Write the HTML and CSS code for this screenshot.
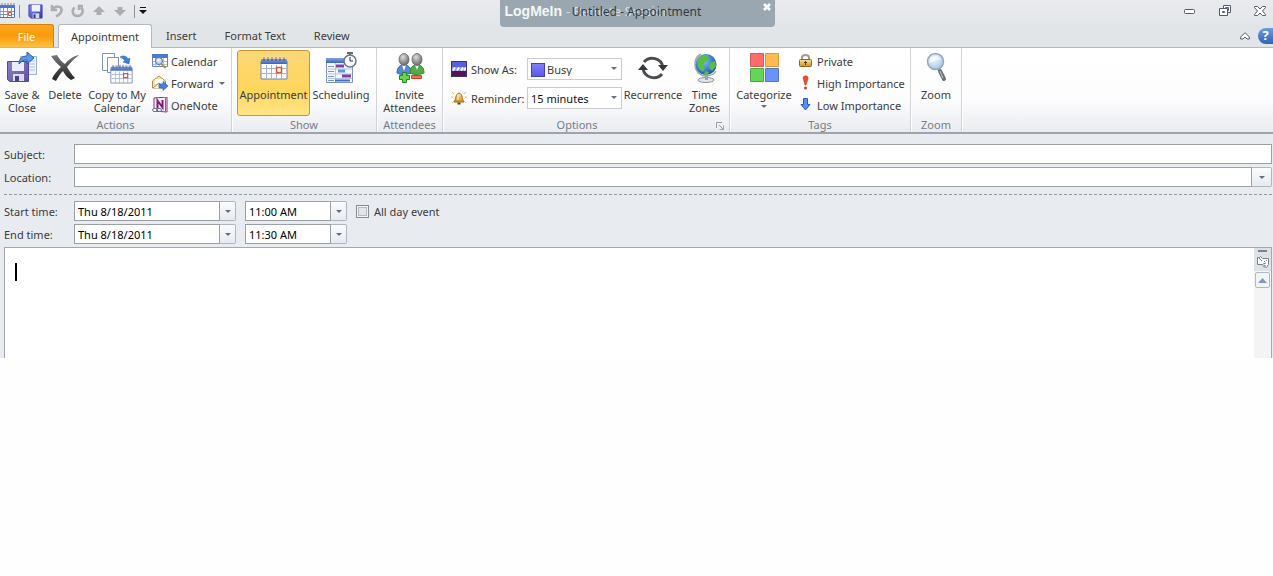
FILE: index.html
```html
<!DOCTYPE html>
<html lang="en">
<head>
    <title>Untitled - Appointment</title>
    <meta charset="UTF-8">
    <meta name="viewport" content="width=device-width, initial-scale=1">
    <link rel="stylesheet" href="styles.css">
</head>
<body>
    <!-- shared icons -->
    <svg class="defs" width="0" height="0" aria-hidden="true">
        <defs>
            <linearGradient id="blue-bar" x1="0" y1="0" x2="0" y2="1">
                <stop offset="0" stop-color="#7da5ec"/><stop offset="1" stop-color="#3c62c4"/>
            </linearGradient>
            <linearGradient id="purple" x1="0" y1="0" x2="1" y2="1">
                <stop offset="0" stop-color="#8f83cc"/><stop offset="1" stop-color="#5c4f9e"/>
            </linearGradient>
            <linearGradient id="save-blue" x1="0" y1="0" x2="1" y2="1">
                <stop offset="0" stop-color="#7f8ff0"/><stop offset="1" stop-color="#3138a8"/>
            </linearGradient>
            <linearGradient id="dark" x1="0" y1="0" x2="0" y2="1">
                <stop offset="0" stop-color="#777"/><stop offset="1" stop-color="#222"/>
            </linearGradient>
            <radialGradient id="glass" cx=".4" cy=".35" r=".7">
                <stop offset="0" stop-color="#f4faff"/><stop offset="1" stop-color="#9cc3ea"/>
            </radialGradient>
            <radialGradient id="sea" cx=".4" cy=".35" r=".7">
                <stop offset="0" stop-color="#7cc4fa"/><stop offset="1" stop-color="#1450a8"/>
            </radialGradient>
            <radialGradient id="head" cx=".4" cy=".3" r=".7">
                <stop offset="0" stop-color="#ddd"/><stop offset="1" stop-color="#666"/>
            </radialGradient>
            <linearGradient id="gold" x1="0" y1="0" x2="0" y2="1">
                <stop offset="0" stop-color="#fbe6a0"/><stop offset="1" stop-color="#c98f1c"/>
            </linearGradient>
        </defs>
        <symbol id="month" viewBox="0 0 28 24">
            <path d="M1 5h26v18H1z" fill="#fff" stroke="#7382a4"/>
            <path d="M1 3h26v5H1z" fill="url(#blue-bar)"/>
            <path d="M4 1v4M8 1v4M12 1v4M16 1v4M20 1v4M24 1v4" stroke="#666e80" stroke-width="2"/>
            <path d="M4 0v3M8 0v3M12 0v3M16 0v3M20 0v3M24 0v3" stroke="#e8ecf4"/>
            <path d="M6.500 9v14M11.500 9v14M16.500 9v14M21.500 9v14M2 12.500h24M2 17.500h24" stroke="#a3b3d2"/>
            <path d="M16.500 11.500h5v5h-5z" fill="#fff" stroke="#e4532b" stroke-width="1.500"/>
        </symbol>
        <symbol id="floppy" viewBox="0 0 16 16">
            <path d="M1 1h14v14H3l-2-2z" fill="url(#save-blue)" stroke="#3c42a8"/>
            <path d="M4 1h9v7H4z" fill="#eef2fb"/>
            <path d="M5 10h7v5H5z" fill="#d8d8e2"/>
            <path d="M6 11h2v4H6z" fill="#2b3080"/>
        </symbol>
    </svg>

    <div class="window">
        <header class="title-bar">
            <div class="quick-access">
                <svg class="app-icon" width="16" height="16" viewBox="0 0 16 16">
                    <path d="M0 2.500h14.500v12H0z" fill="#fff" stroke="#5370b4"/>
                    <path d="M0 2h15v3H0z" fill="#4a76d0"/>
                    <path d="M2 0v3M5 0v3M8 0v3M11 0v3M14 0v3" stroke="#7b849a"/>
                    <path d="M3.500 5v9M7.500 5v9M11.500 5v9M0 8.500h14M0 11.500h14" stroke="#8296c4"/>
                    <path d="M8.500 9.500h3v3h-3z" fill="#fff" stroke="#e4532b"/>
                </svg>
                <span class="separator"></span>
                <button aria-label="Save"><svg width="15" height="15"><use href="#floppy"/></svg></button>
                <button aria-label="Undo"><svg width="14" height="14" viewBox="0 0 14 14" fill="none" stroke="#abadb1" stroke-width="2.500"><path d="M2 1v5h5M2.500 5.500C6 1 12 2 11.500 6.500c-.3 2.500-2.500 4.500-5.500 6"/></svg></button>
                <button aria-label="Redo"><svg width="14" height="14" viewBox="0 0 14 14" fill="none" stroke="#abadb1" stroke-width="2.500"><path d="M3.500 3.500C0 7 2 12 6.500 12s7-5 3.500-8.500M7 2h5M8 1v5"/></svg></button>
                <button aria-label="Previous item"><svg width="14" height="14" viewBox="0 0 14 14"><path d="M7 2l6 6H9.500v3h-5V8H1z" fill="#abadb1"/></svg></button>
                <button aria-label="Next item"><svg width="14" height="14" viewBox="0 0 14 14"><path d="M7 12l6-6H9.500V3h-5v3H1z" fill="#abadb1"/></svg></button>
                <span class="separator"></span>
                <button class="customize" aria-label="Customize"><svg width="8" height="8" viewBox="0 0 8 8"><path d="M1 0h6v1H1zM0 3h8L4 7z" fill="#111"/></svg></button>
            </div>
            <h1 class="window-title">Untitled - Appointment</h1>
            <div class="session">
                <strong>LogMeIn</strong><span>- Remote Session</span>
                <button aria-label="Close session"><svg width="8" height="8" viewBox="0 0 8 8"><path d="M1 1l6 6M7 1L1 7" stroke="#fff" stroke-width="2.500"/></svg></button>
            </div>
            <div class="window-controls">
                <button aria-label="Minimize"><svg width="12" height="12" viewBox="0 0 12 12"><rect x=".5" y="4.500" width="10" height="4" rx="1" fill="#fff" stroke="#555b68"/></svg></button>
                <button aria-label="Restore"><svg width="12" height="12" viewBox="0 0 12 12" fill="#fff" stroke="#555b68"><path d="M4.500 .5h7v7h-7z"/><path d="M6.500 2.500h3v3h-3z"/><path d="M.5 3.500h8v7h-8z"/><path d="M3.500 6.500h2v1h-2z"/></svg></button>
                <button aria-label="Close"><svg width="12" height="12" viewBox="0 0 12 12"><path d="M.5 1.500h3L6 4l2.500-2.500h3v1L8.500 6l3 3.500v1h-3L6 8l-2.500 2.500h-3v-1l3-3.500-3-3.500z" fill="#fff" stroke="#555b68"/></svg></button>
            </div>
        </header>

        <nav class="tabs">
            <button class="tab file">File</button>
            <button class="tab active">Appointment</button>
            <button class="tab">Insert</button>
            <button class="tab">Format Text</button>
            <button class="tab">Review</button>
            <div class="tab-tools">
                <button aria-label="Minimize the ribbon"><svg width="10" height="8" viewBox="0 0 10 8"><path d="M5 .7L9.300 5v2H7L5 5 3 7H.7V5z" fill="#fff" stroke="#555b68"/></svg></button>
                <button class="help" aria-label="Help">?</button>
            </div>
        </nav>

        <div class="ribbon">
            <section class="group actions">
                <div class="tools">
                    <button class="big save">
                        <svg width="32" height="32" viewBox="0 0 32 32">
                            <path d="M14.500 4.500h16v18h-16z" fill="#eef4fd" stroke="#9bb0d4"/>
                            <path d="M22 9h7M22 12h7M22 15h7M22 18h7" stroke="#a9bddd"/>
                            <path d="M1.500 9.500h21v20h-19l-2-2z" fill="url(#purple)" stroke="#544999"/>
                            <path d="M6 10h12v9H6z" fill="#e9edf8"/>
                            <path d="M7 22h11v7H7z" fill="#dcdce6"/><path d="M9 24h4v5H9z" fill="#4b418d"/>
                            <path d="M13 12c0-5 3-8 8-8V0l7 6-7 6V8c-4 0-5 1-8 4z" fill="#5d97e6" stroke="#2a5bb0"/>
                        </svg>
                        <span>Save &amp; Close</span>
                    </button>
                    <button class="big delete">
                        <svg width="32" height="32" viewBox="0 0 32 32"><path d="M2 4l6-1c3 5 5 7 8 9 3-4 8-8 14-9l-1 1c-5 4-8 7-11 11 3 5 5 8 8 11l-4 2c-4-3-6-5-8-9-3 3-5 6-7 10l-4-2c2-5 5-8 9-12C8 12 5 8 2 4z" fill="url(#dark)"/></svg>
                        <span>Delete</span>
                    </button>
                    <button class="big copy">
                        <svg width="32" height="32" viewBox="0 0 32 32">
                            <path d="M1.500 1.500h12v17h-12z" fill="#fff" stroke="#7d94b8"/>
                            <path d="M6.500 5.500h11v15h-11z" fill="#fff" stroke="#7d94b8"/>
                            <path d="M19 5c3-2 7-1 8 2l2-1-1 6-6-2 2-1c-1-2-3-3-5-4z" fill="#3f7ddc" stroke="#2858ad" stroke-width=".5"/>
                            <svg x="9" y="12" width="23" height="20"><use href="#month"/></svg>
                        </svg>
                        <span>Copy to My Calendar</span>
                    </button>
                    <div class="stack">
                        <button class="small">
                            <svg width="16" height="16" viewBox="0 0 16 16">
                                <path d="M.5 1.500h15v12H.5z" fill="#fff" stroke="#6585c6"/><path d="M0 1h16v4H0z" fill="#4a7ad2"/>
                                <path d="M3.500 5v8M7.500 5v8M11.500 5v8M1 8.500h14M1 11.500h14" stroke="#b1c2e2"/>
                                <circle cx="7" cy="8" r="3.500" fill="url(#glass)" stroke="#68737f"/><path d="M9.500 11l4 4" stroke="#c58b38" stroke-width="2"/>
                            </svg>
                            <span>Calendar</span>
                        </button>
                        <button class="small">
                            <svg width="16" height="16" viewBox="0 0 16 16">
                                <path d="M.5 6L7 1l6.500 5v7H.5z" fill="#fbe1a1" stroke="#a98b53"/><path d="M3 4h8v5H3z" fill="#fff"/><path d="M1 13l6-5 6 5" fill="#fff3cf" stroke="#a98b53"/>
                                <path d="M7 9h4V6.500l5 4.500-5 4.500V13H7z" fill="#4383e4" stroke="#2857ac" stroke-width=".6"/>
                            </svg>
                            <span>Forward</span><i class="arrow"></i>
                        </button>
                        <button class="small">
                            <svg width="16" height="16" viewBox="0 0 16 16">
                                <path d="M2 1l13-1v15l-13-1z" fill="#f6e8f5" stroke="#8a3382"/>
                                <path d="M5.500 11V3.500l5 7V3" fill="none" stroke="#7c1f76" stroke-width="2"/><path d="M13.500 1v13" stroke="#a850a0"/>
                                <rect x=".6" y="11.500" width="5" height="3" rx="1.500" fill="#fff" stroke="#66738e"/><rect x="4.500" y="11.500" width="5" height="3" rx="1.500" fill="none" stroke="#66738e"/>
                            </svg>
                            <span>OneNote</span>
                        </button>
                    </div>
                </div>
                <h2>Actions</h2>
            </section>

            <section class="group show">
                <div class="tools">
                    <button class="big wide selected">
                        <svg width="32" height="32" viewBox="0 0 32 32"><svg x="2" y="4" width="28" height="24"><use href="#month"/></svg></svg>
                        <span>Appointment</span>
                    </button>
                    <button class="big scheduling">
                        <svg width="32" height="32" viewBox="0 0 32 32">
                            <path d="M1.500 6.500h26v24h-26z" fill="#f4f8ff" stroke="#7b92c0"/><path d="M1 6h27v5H1z" fill="url(#blue-bar)"/>
                            <path d="M3 14.500h6M3 19.500h6M3 24.500h6M3 28.500h6" stroke="#7b95cb"/>
                            <path d="M10.500 11v19M1 17h26M1 22h26M1 26.500h26" stroke="#b6c6e2"/>
                            <path d="M11 12.500h8v3h-8zM17 22.500h9v3h-9z" fill="#824099"/><path d="M13 17.500h7v3h-7z" fill="#5c9bea"/><path d="M10 27.500h15v2H10z" fill="#3f6fd0"/>
                            <path d="M22 1h6M25 1v3" stroke="#626974" stroke-width="2"/>
                            <circle cx="25" cy="9" r="6" fill="#f4f8fb" stroke="#6c747e" stroke-width="1.500"/><path d="M25 5v4h3" fill="none" stroke="#334"/>
                        </svg>
                        <span>Scheduling</span>
                    </button>
                </div>
                <h2>Show</h2>
            </section>

            <section class="group attendees">
                <div class="tools">
                    <button class="big invite">
                        <svg width="32" height="32" viewBox="0 0 32 32">
                            <path d="M3 21c0-6 3-8 7-8s7 2 7 8c-5 2-10 2-14 0z" fill="#5787dc" stroke="#3861b2"/>
                            <path d="M16 21c0-6 3-8 7-8s7 2 7 8c-5 2-10 2-14 0z" fill="#54ac49" stroke="#36822e"/>
                            <path d="M8 13l2 6 2-6M21 13l2 5 2-5" fill="#fff"/>
                            <ellipse cx="10" cy="7.500" rx="5" ry="6" fill="url(#head)" stroke="#666" stroke-width=".8"/><ellipse cx="23" cy="7.500" rx="5" ry="6" fill="url(#head)" stroke="#666" stroke-width=".8"/>
                            <path d="M8.500 20.500h4v3h3v4h-3v3h-4v-3h-3v-4h3z" fill="#65d54f" stroke="#26851e"/>
                            <path d="M17.500 23.500h10v3h-10z" fill="#ff7048" stroke="#d8402c"/>
                        </svg>
                        <span>Invite Attendees</span>
                    </button>
                </div>
                <h2>Attendees</h2>
            </section>

            <section class="group options">
                <div class="tools">
                    <div class="pickers">
                        <div class="picker">
                            <svg width="16" height="16" viewBox="0 0 16 16">
                                <path d="M0 0h16v16H0z" fill="#5a5fe0"/><path d="M0 10h16v6H0z" fill="#5b1050"/><path d="M1 6h14v4H1z" fill="#8a92e2"/>
                                <path d="M2 9.500l2-3M6 9.500l2-3M10 9.500l2-3M13 9.500l2-3" stroke="#fff" stroke-width="2"/><path d="M.5 .5h15v15H.5z" fill="none" stroke="#3a3282"/>
                            </svg>
                            <label for="show-as">Show As:</label>
                            <div class="drop busy"><select id="show-as"><option>Busy</option><option>Free</option></select></div>
                        </div>
                        <div class="picker">
                            <svg width="16" height="16" viewBox="0 0 16 16">
                                <path d="M1 2l2 2M15 2l-2 2M0 7h2M14 7h2M1 13l2-2M15 13l-2-2" stroke="#efb55b"/>
                                <path d="M3 12c2-2 1-8 5-9 4 1 3 7 5 9z" fill="url(#gold)" stroke="#a66d16"/><path d="M6.500 12.500h3v2h-3z" fill="#6b3d0c"/><path d="M7 5v5" stroke="#fffbe0"/>
                            </svg>
                            <label for="reminder">Reminder:</label>
                            <div class="drop"><select id="reminder"><option>15 minutes</option><option>30 minutes</option></select></div>
                        </div>
                    </div>
                    <button class="big recurrence">
                        <svg width="32" height="32" viewBox="0 0 32 32">
                            <path d="M7 10a11 11 0 0 1 19 5M25 22A11 11 0 0 1 6 17" fill="none" stroke="#4b4e50" stroke-width="3"/>
                            <path d="M21 13h10l-5 6zM1 18h10l-5-6z" fill="#35383a"/>
                        </svg>
                        <span>Recurrence</span>
                    </button>
                    <button class="big zones">
                        <svg width="32" height="32" viewBox="0 0 32 32">
                            <ellipse cx="17" cy="28" rx="8" ry="2.500" fill="#e2e5e8" stroke="#8c949c"/><path d="M16 23h3v5h-3z" fill="#9aa1a8"/>
                            <path d="M12 2C3 7 4 22 16 24c5 0 9-1 11-5" fill="none" stroke="#a0a6ac" stroke-width="1.500"/>
                            <circle cx="17" cy="12.500" r="10.500" fill="url(#sea)"/>
                            <path d="M9 7c3-4 7-5 11-3l-2 3 2 2-4 1-2 4 2 2-2 4-4-3-2-6zM21 11l5-2 1 5-4 5-3-3zM16 19l4 1-2 3h-3z" fill="#5bbd48"/>
                        </svg>
                        <span>Time Zones</span>
                    </button>
                </div>
                <h2>Options</h2>
                <button class="launcher" aria-label="More options"><svg width="8" height="8" viewBox="0 0 8 8" fill="none" stroke="#9aa0aa"><path d="M.5 6V.5H6M3 3l4 4M7.500 3.500v4h-4"/></svg></button>
            </section>

            <section class="group tags">
                <div class="tools">
                    <button class="big categorize">
                        <svg width="32" height="32" viewBox="0 0 32 32">
                            <path d="M2.500 1.500h13v13h-13z" fill="#ff6b6b" stroke="#d95a55"/><path d="M17.500 1.500h13v13h-13z" fill="#ffbb4e" stroke="#d79a3c"/>
                            <path d="M2.500 16.500h13v13h-13z" fill="#64d556" stroke="#4cab44"/><path d="M17.500 16.500h13v13h-13z" fill="#6b93f7" stroke="#5377cc"/>
                        </svg>
                        <span>Categorize</span><i class="arrow"></i>
                    </button>
                    <div class="stack">
                        <button class="small">
                            <svg width="16" height="16" viewBox="0 0 16 16"><path d="M4 8V4.500C4 1 11 1 11 4.500V8" fill="none" stroke="#a39b84" stroke-width="2"/><rect x="1.500" y="6.500" width="12" height="7" rx="1" fill="url(#gold)" stroke="#8f681e"/><path d="M7.500 8v4M6 9.500h3" stroke="#513708"/></svg>
                            <span>Private</span>
                        </button>
                        <button class="small">
                            <svg width="16" height="16" viewBox="0 0 16 16"><path d="M5 3c0-3 6-3 5 1L8 10H7z" fill="#e9522d" stroke="#b93218" stroke-width=".5"/><circle cx="7.500" cy="13" r="1.500" fill="#d6421f"/></svg>
                            <span>High Importance</span>
                        </button>
                        <button class="small">
                            <svg width="16" height="16" viewBox="0 0 16 16"><path d="M5.500 1.500h4v6h2.500L7.500 13 3 7.500h2.500z" fill="#5791f0" stroke="#2858b8"/></svg>
                            <span>Low Importance</span>
                        </button>
                    </div>
                </div>
                <h2>Tags</h2>
            </section>

            <section class="group zoom">
                <div class="tools">
                    <button class="big">
                        <svg width="32" height="32" viewBox="0 0 32 32">
                            <path d="M18 17l2 3" stroke="#9aa0a8" stroke-width="2"/><path d="M20 19l4 8" stroke="#6b7079" stroke-width="4" stroke-linecap="round"/><path d="M20 19l3 7" stroke="#c4c8ce"/>
                            <circle cx="15.500" cy="9.500" r="8" fill="url(#glass)" stroke="#9aa5b3" stroke-width="1.500"/><path d="M9 11c3 0 6-4 12-3-1-6-11-6-12 3z" fill="#fff" opacity=".6"/>
                        </svg>
                        <span>Zoom</span>
                    </button>
                </div>
                <h2>Zoom</h2>
            </section>
        </div>

        <form class="details">
            <div class="row">
                <label for="subject">Subject:</label>
                <input type="text" id="subject">
            </div>
            <div class="row">
                <label for="location">Location:</label>
                <div class="combo fill"><input type="text" id="location"><button type="button" aria-label="Recent locations"><i class="arrow"></i></button></div>
            </div>
            <hr>
            <div class="row">
                <label for="start-date">Start time:</label>
                <div class="combo date"><input type="text" id="start-date" value="Thu 8/18/2011"><button type="button" aria-label="Choose start date"><i class="arrow"></i></button></div>
                <div class="combo time"><input type="text" aria-label="Start hour" value="11:00 AM"><button type="button" aria-label="Choose start hour"><i class="arrow"></i></button></div>
                <label class="all-day"><input type="checkbox">All day event</label>
            </div>
            <div class="row">
                <label for="end-date">End time:</label>
                <div class="combo date"><input type="text" id="end-date" value="Thu 8/18/2011"><button type="button" aria-label="Choose end date"><i class="arrow"></i></button></div>
                <div class="combo time"><input type="text" aria-label="End hour" value="11:30 AM"><button type="button" aria-label="Choose end hour"><i class="arrow"></i></button></div>
            </div>
            <div class="notes">
                <textarea aria-label="Notes"></textarea>
                <span class="caret"></span>
                <div class="scrollbar">
                    <span class="split"></span>
                    <button type="button" aria-label="Select browse object"><svg width="12" height="12" viewBox="0 0 12 12" fill="#fff" stroke="#777f8c"><path d="M.5 1.500h2l1-1 2 2h6v6l-2 3-3-1-1-2h-5z"/><path d="M2 2l3 3M7 5l1 1M9 4l1 1M6 8l3-1M7 9l2 1"/></svg></button>
                    <button type="button" class="scroll-up" aria-label="Scroll up"><svg width="9" height="5" viewBox="0 0 9 5"><path d="M0 5l4.500-5L9 5z" fill="#8397bd"/></svg></button>
                </div>
            </div>
        </form>
    </div>
</body>
</html>
```
FILE: styles.css
```css
body {
    margin: 0;
    background: #fefefe;
    color: #3b3b3b;
    font-family: "Noto Sans", "Open Sans", sans-serif;
    font-size: 11px;
    line-height: 13px;
}

* {
    box-sizing: border-box;
}

button, input, select, textarea {
    font: inherit;
    color: inherit;
}

button {
    display: flex;
    align-items: center;
    justify-content: center;
    padding: 0;
    border: 0;
    background: none;
}

svg {
    display: block;
    flex: none;
}

h1, h2 {
    margin: 0;
    font-size: 11px;
    font-weight: normal;
}

.defs {
    position: absolute;
}

.window {
    background: #e8ebf0;
}

.arrow {
    border: 3px solid transparent;
    border-top-color: #666c78;
    border-bottom: 0;
}

/* title bar */

.title-bar {
    position: relative;
    display: flex;
    align-items: center;
    justify-content: space-between;
    height: 24px;
    padding-bottom: 2px;
    background: linear-gradient(#e9ebef, #e3e6e9);
}

.quick-access {
    display: flex;
    align-items: center;
    gap: 8px;
}

.separator {
    width: 1px;
    height: 13px;
    background: #8e9299;
}

.app-icon {
    margin-right: -5px;
}

.quick-access button {
    margin-right: -1px;
}

.quick-access .customize {
    margin-left: -4px;
}

.window-title {
    position: absolute;
    left: 0;
    right: 0;
    text-align: center;
    font-size: 12px;
    color: #333b43;
    z-index: 2;
}

.session {
    position: absolute;
    top: 0;
    left: 50%;
    display: flex;
    gap: 4px;
    width: 275px;
    height: 27px;
    padding: 5px;
    margin-left: -137px;
    border-radius: 0 0 4px 4px;
    background: #9aa7b0;
    color: #d6dce0;
    font-size: 13px;
    z-index: 1;
}

.session strong {
    font-family: "Liberation Sans", sans-serif;
    font-size: 14px;
    color: #f4f6f7;
}

.session button {
    position: absolute;
    top: 3px;
    right: 4px;
}

.window-controls {
    display: flex;
    gap: 23px;
    padding-right: 7px;
}

/* tabs */

.tabs {
    display: flex;
    height: 24px;
    background: #e2e5e8;
    border-bottom: 1px solid #b4b8be;
}

.tab {
    padding: 0 14px;
}

.tab.file {
    width: 54px;
    margin-right: 4px;
    border: 1px solid #d58108;
    border-left: 0;
    border-bottom: 0;
    border-radius: 0 3px 0 0;
    background: linear-gradient(#fba61c, #f99b0c 50%, #ffc13d);
    color: #fff;
}

.tab.active {
    width: 94px;
    height: 24px;
    padding: 0;
    border: 1px solid #b4b8be;
    border-bottom: 0;
    border-radius: 3px 3px 0 0;
    background: #fff;
}

.tab-tools {
    display: flex;
    align-items: center;
    gap: 8px;
    margin-left: auto;
}

.help {
    width: 15px;
    height: 16px;
    border-radius: 8px 0 0 8px;
    background: linear-gradient(#6c9be0, #2f63b8);
    color: #fff;
    font-size: 13px;
    font-weight: bold;
}

/* ribbon */

.ribbon {
    display: flex;
    height: 86px;
    border-bottom: 2px solid #a0a4aa;
    background: linear-gradient(#fff, #fdfdfe 60%, #eaecf0);
}

.group {
    position: relative;
    display: flex;
    flex-direction: column;
    justify-content: space-between;
    padding: 2px 0 1px;
    border-right: 1px solid #cfd2d8;
    box-shadow: 1px 0 #fff;
}

.group h2 {
    text-align: center;
    color: #767c88;
}

.tools {
    display: flex;
    height: 66px;
}

.actions {
    width: 232px;
}

.show {
    width: 145px;
}

.show .tools {
    padding-left: 5px;
}

.attendees {
    width: 66px;
}

.options {
    width: 287px;
}

.options h2 {
    padding-right: 18px;
}

.tags {
    width: 181px;
}

.zoom {
    width: 51px;
}

.big {
    flex: none;
    flex-direction: column;
    justify-content: flex-start;
    gap: 4px;
    padding-top: 2px;
    height: 66px;
}

.zoom .big, .invite {
    width: 100%;
}

.save {
    width: 44px;
}

.delete {
    width: 42px;
}

.copy {
    width: 62px;
}

.wide {
    width: 73px;
}

.scheduling {
    width: 62px;
}

.recurrence {
    width: 60px;
}

.zones {
    width: 43px;
}

.categorize {
    width: 68px;
}

.selected {
    padding-top: 1px;
    border: 1px solid #c29a2f;
    border-radius: 3px;
    background: linear-gradient(#fcd775, #ffd65c 60%, #ffe587);
}

.stack {
    display: flex;
    flex-direction: column;
    padding-left: 4px;
}

.small {
    height: 22px;
    gap: 3px;
    justify-content: flex-start;
}

.small .arrow {
    margin-left: 2px;
}

.tags .stack {
    padding-left: 0;
}

.pickers {
    display: flex;
    flex-direction: column;
    gap: 7px;
    width: 180px;
    padding: 8px 0 0 8px;
}

.picker {
    display: flex;
    align-items: center;
    gap: 4px;
}

.picker label {
    width: 52px;
    white-space: nowrap;
}

.drop {
    position: relative;
    flex: 1;
}

.drop select {
    display: block;
    appearance: none;
    width: 95px;
    height: 22px;
    padding: 0 3px;
    border: 1px solid #c8cbd0;
    border-radius: 0;
    background: #fff;
    color: #111;
}

.drop::after {
    content: "";
    position: absolute;
    top: 9px;
    left: 84px;
    border: 3px solid transparent;
    border-top-color: #666c78;
    border-bottom: 0;
    pointer-events: none;
}

.busy select {
    padding-left: 19px;
    color: #3b3b3b;
}

.busy::before {
    content: "";
    position: absolute;
    top: 5px;
    left: 4px;
    width: 12px;
    height: 12px;
    border: 1px solid #4242b0;
    background: linear-gradient(#8080fa, #5a5ae6);
}

.launcher {
    position: absolute;
    right: 5px;
    bottom: 2px;
}

/* form */

.details {
    display: flex;
    flex-direction: column;
    gap: 3px;
    padding: 10px 1px 0 4px;
}

.row {
    display: flex;
    align-items: center;
    gap: 9px;
    height: 20px;
}

.row > label:first-child {
    width: 61px;
}

.row input[type="text"] {
    flex: 1;
    min-width: 0;
    height: 20px;
    padding: 0 3px;
    border: 1px solid #9c9fa6;
    background: #fff;
    color: #000;
}

.combo {
    display: flex;
}

.combo button {
    width: 16px;
    height: 20px;
    border: 1px solid #b0b5be;
    border-left: 0;
    border-radius: 0 2px 2px 0;
    background: linear-gradient(#fbfcfd, #e6eaf1);
}

.fill {
    flex: 1;
}

.fill button {
    width: 20px;
}

.date {
    width: 162px;
}

.time {
    width: 102px;
}

.all-day {
    display: flex;
    align-items: center;
    gap: 5px;
}

.all-day input {
    appearance: none;
    width: 13px;
    height: 13px;
    margin: 0;
    border: 1px solid #868b94;
    background: #e4e5e8;
    box-shadow: inset 0 0 0 1px #f4f4f4, inset 0 0 0 2px #b7bac0;
}

hr {
    width: 100%;
    margin: 4px 0 3px;
    border: 0;
    border-top: 1px dashed #9297a0;
}

.notes {
    position: relative;
    display: flex;
    min-height: 111px;
    border: 1px solid #a3a8b0;
    border-bottom: 0;
    background: #fff;
}

.notes textarea {
    flex: 1;
    padding: 14px 10px;
    border: 0;
    outline: 0;
    resize: none;
    background: none;
}

.caret {
    position: absolute;
    top: 15px;
    left: 10px;
    width: 2px;
    height: 18px;
    background: #000;
}

.scrollbar {
    display: flex;
    flex-direction: column;
    align-items: center;
    gap: 4px;
    width: 17px;
    padding-top: 2px;
    background: linear-gradient(#dde1e8 23px, #f4f4f5 23px);
}

.split {
    width: 9px;
    height: 2px;
    background: #7b828e;
}

.scroll-up {
    width: 15px;
    height: 16px;
    border: 1px solid #b2b8c2;
    border-radius: 2px;
    background: #f1f3f7;
}
```
